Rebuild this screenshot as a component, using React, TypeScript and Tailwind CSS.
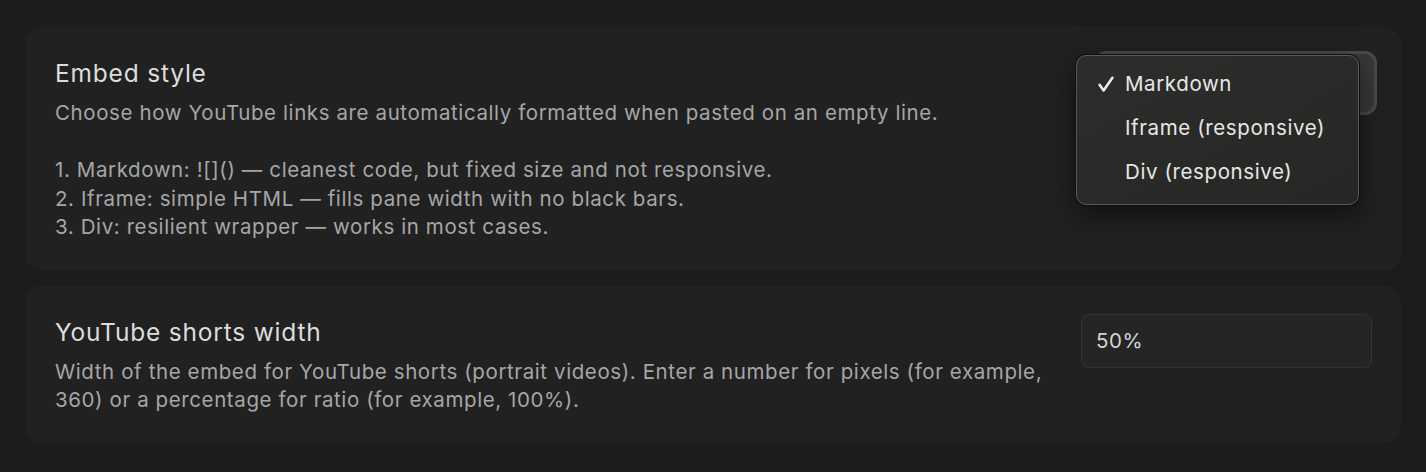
import { useState } from 'react'

const options = ['Markdown', 'Iframe (responsive)', 'Div (responsive)']

function Check() {
  return (
    <svg viewBox="0 0 16 16" className="w-4 h-4" fill="none">
      <path
        d="M1.6 8.8 L5.6 14.4 L14.4 1.8"
        stroke="#ececec"
        strokeWidth="2.6"
        strokeLinecap="round"
        strokeLinejoin="round"
      />
    </svg>
  )
}

function SettingCard({
  title,
  children,
  control,
}: {
  title: string
  children: React.ReactNode
  control: React.ReactNode
}) {
  return (
    <div className="flex items-start justify-between gap-8 rounded-[16px] bg-[#212121] px-[30px] pt-[30px] pb-[28px]">
      <div className="w-[1000px]">
        <div className="text-[24.5px] leading-[32px] tracking-[0.8px] text-[#dcdcdc]">{title}</div>
        <div className="mt-[10px] text-[20.5px] leading-[28.5px] tracking-[0.6px] text-[#a6a6a6]">{children}</div>
      </div>
      {control}
    </div>
  )
}

export default function App() {
  const [selected] = useState(0)

  return (
    <div
      className="min-h-screen w-[1426px] h-[472px] bg-[#1c1c1c] px-[25px] pt-[27px] flex flex-col gap-[16px]"
      style={{ fontFamily: 'Inter, "Noto Sans", sans-serif' }}
    >
      <SettingCard
        title="Embed style"
        control={
          <div className="relative -mt-[6px] -mr-[6px]">
            <div className="w-[283px] h-[64px] rounded-[12px] border-[3px] border-[#4a4a4a] bg-[#393939]" />
            {/* open menu */}
            <div className="absolute left-[-18px] top-[4px] w-[283px] h-[150px] rounded-[10px] border border-[#5a5a5a] bg-gradient-to-br from-[#2d2e2c] to-[#262725] shadow-[0_0_0_1px_#0e0e0e,0_10px_30px_rgba(0,0,0,0.55)] pt-[6px]">
              {options.map((o, i) => (
                <div key={o} className="flex h-[44px] items-center">
                  <div className="w-[48px] flex justify-end pr-[11px]">
                    {i === selected && <Check />}
                  </div>
                  <span className="text-[20.5px] tracking-[0.6px] text-[#e6e6e6]">{o}</span>
                </div>
              ))}
            </div>
          </div>
        }
      >
        <div>Choose how YouTube links are automatically formatted when pasted on an empty line.</div>
        <div className="h-[28.5px]" />
        <div>1. Markdown: ![]() — cleanest code, but fixed size and not responsive.</div>
        <div>2. Iframe: simple HTML — fills pane width with no black bars.</div>
        <div>3. Div: resilient wrapper — works in most cases.</div>
      </SettingCard>

      <SettingCard
        title="YouTube shorts width"
        control={
          <input
            defaultValue="50%"
            className="-mt-[2px] -mr-[1px] w-[291px] h-[54px] shrink-0 rounded-[8px] border border-[#343434] bg-[#252525] px-[14px] text-[20.5px] tracking-[0.5px] text-[#d4d4d4] outline-none"
          />
        }
      >
        Width of the embed for YouTube shorts (portrait videos). Enter a number for pixels (for example,
        360) or a percentage for ratio (for example, 100%).
      </SettingCard>
    </div>
  )
}
